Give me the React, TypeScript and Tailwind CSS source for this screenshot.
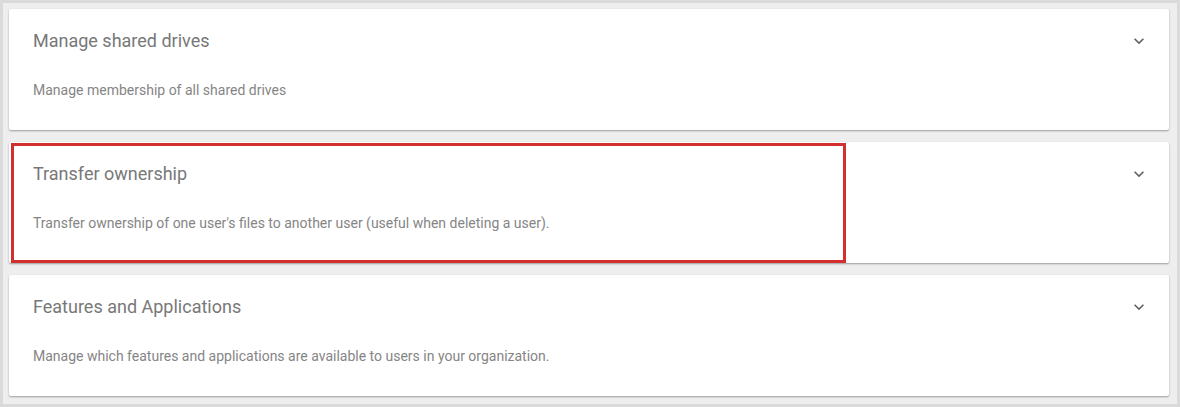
const cards = [
  { title: "Manage shared drives", desc: "Manage membership of all shared drives", marked: false },
  {
    title: "Transfer ownership",
    desc: "Transfer ownership of one user's files to another user (useful when deleting a user).",
    marked: true,
  },
  {
    title: "Features and Applications",
    desc: "Manage which features and applications are available to users in your organization.",
    marked: false,
  },
];

function ExpandMore() {
  return (
    <svg viewBox="0 0 24 24" className="h-[20px] w-[20px] fill-[#616161]" aria-hidden>
      <path d="M7.41 8.59 12 13.17l4.59-4.58L18 10l-6 6-6-6z" />
    </svg>
  );
}

export default function App() {
  return (
    <div className="h-[407px] w-[1180px] border-[3px] border-[#dadada] bg-[#eeeeee] pt-[6px] pb-[8px] pl-[6px] pr-[8px] font-['Roboto',sans-serif]">
      <div className="flex flex-col gap-[12px]">
        {cards.map((card) => (
          <div
            key={card.title}
            className="relative h-[121px] rounded-[2px] bg-white shadow-[0_1px_2px_rgba(0,0,0,0.35)]"
          >
            <div className="flex items-center justify-between pt-[20px] pl-[24px] pr-[20px]">
              <h2 className="text-[18px] leading-[24px] font-normal text-[#787878]">{card.title}</h2>
              <ExpandMore />
            </div>
            <p className="mt-[27px] pl-[24px] text-[14px] leading-[20px] text-[#858585]">{card.desc}</p>
            {card.marked ? (
              <div className="pointer-events-none absolute top-[1px] left-[2px] h-[120px] w-[835px] border-[3px] border-[#d32f2f]" />
            ) : null}
          </div>
        ))}
      </div>
    </div>
  );
}
